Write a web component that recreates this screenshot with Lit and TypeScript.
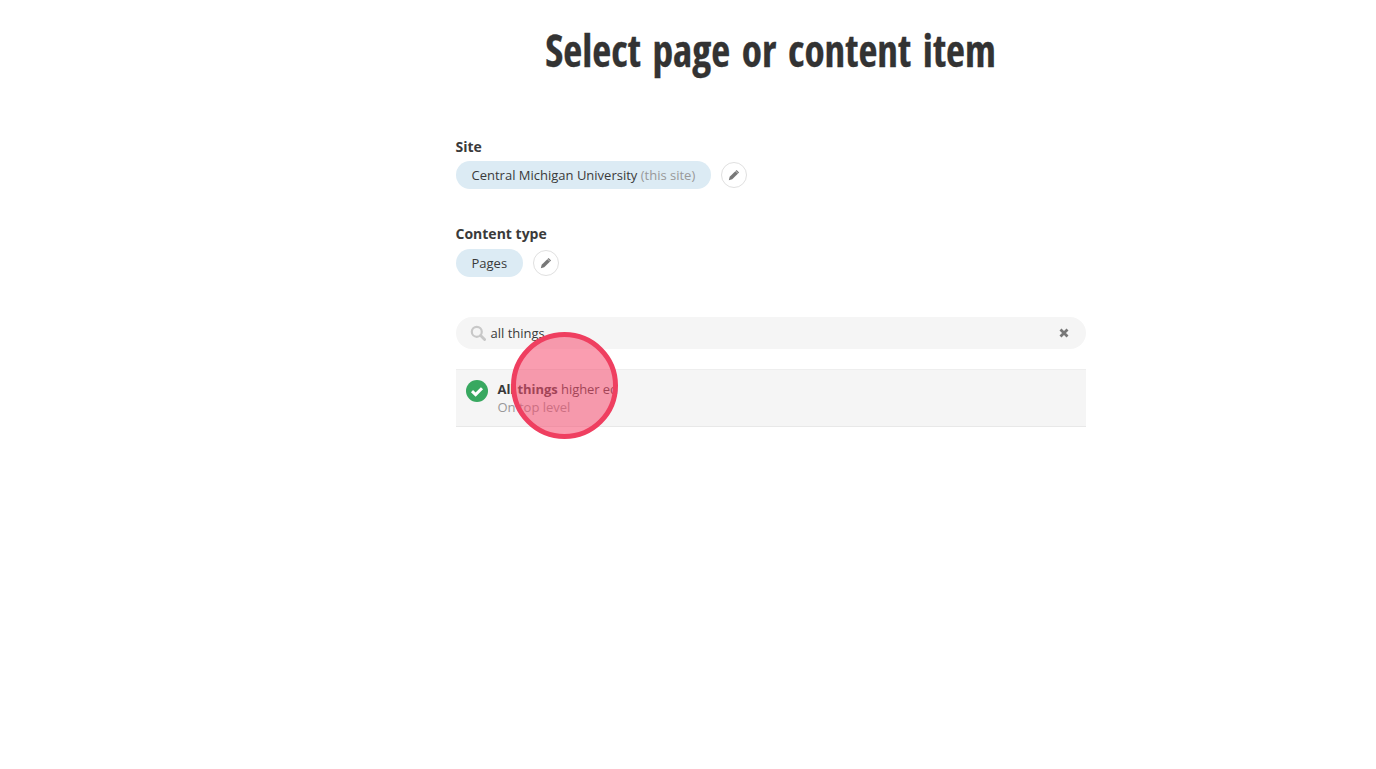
import { LitElement, html, css } from 'lit';
import { customElement } from 'lit/decorators.js';

const pencil = html`<svg class="pencil" viewBox="0 0 12 12"><path d="M8.6 .9 11.1 3.4 4.2 10.3 .8 11.2 1.7 7.8Z" fill="currentColor"/><path d="M7.5 2 10 4.5" stroke="#fff" stroke-width=".6"/></svg>`;

@customElement('app-root')
export class AppRoot extends LitElement {
    static styles = css`
        :host {
            display: block;
            height: 769px;
            background: #fff;
            font-family: 'Open Sans', sans-serif;
            font-size: 13px;
            color: #3a3a3a;
            overflow: hidden;
        }
        .page {
            position: relative;
            height: 769px;
            padding-left: 165px;
            box-sizing: border-box;
        }
        .title {
            margin: 0;
            padding-top: 25px;
            height: 137px;
            box-sizing: border-box;
            text-align: center;
            font-size: 44px;
            line-height: 50px;
            font-weight: 700;
            font-stretch: 75%;
            word-spacing: 4.5px;
            color: #333;
            -webkit-text-stroke: 0.3px #333;
            transform: scaleX(0.94);
        }
        .form {
            width: 630px;
            margin: 0 auto;
        }
        .field {
            height: 88px;
        }
        .label {
            font-weight: 700;
            font-size: 14px;
            line-height: 20px;
            height: 24px;
        }
        .field + .field .label {
            position: relative;
            top: -1px;
        }
        .row {
            display: flex;
            align-items: center;
            gap: 10px;
        }
        .pill {
            height: 28px;
            line-height: 28px;
            padding: 0 16px;
            border-radius: 14px;
            background: #dcebf4;
        }
        .muted {
            color: #999;
        }
        .edit {
            width: 24px;
            height: 24px;
            border: 1px solid #e0e0e0;
            border-radius: 50%;
            display: flex;
            align-items: center;
            justify-content: center;
            color: #777;
        }
        .pencil {
            width: 12px;
            height: 12px;
        }
        .search {
            display: flex;
            align-items: center;
            height: 32px;
            margin-top: 4px;
            padding: 0 12px 0 14px;
            border-radius: 16px;
            background: #f5f5f5;
        }
        .search .glass {
            width: 16px;
            height: 16px;
            margin-right: 5px;
        }
        .search .text {
            flex: 1;
        }
        .search .clear {
            width: 10px;
            height: 10px;
            margin-right: 5px;
        }
        .result {
            display: flex;
            align-items: flex-start;
            height: 58px;
            box-sizing: border-box;
            margin-top: 20px;
            padding: 10px 10px;
            background: #f5f5f5;
            border-top: 1px solid #eee;
            border-bottom: 1px solid #e8e8e8;
        }
        .check {
            width: 22px;
            height: 22px;
            margin-right: 10px;
            flex: none;
        }
        .lines {
            line-height: 18px;
        }
        .name {
            letter-spacing: -0.06px;
        }
        .sub {
            color: #999;
        }
        .spot {
            position: absolute;
            left: 511px;
            top: 332px;
            width: 107px;
            height: 107px;
            box-sizing: border-box;
            border: 5px solid #ef3f60;
            border-radius: 50%;
            background: rgba(246, 77, 111, 0.55);
        }
    `;

    render() {
        return html`
            <div class="page">
                <h1 class="title">Select page or content item</h1>
                <div class="form">
                    <div class="field">
                        <div class="label">Site</div>
                        <div class="row">
                            <span class="pill">Central Michigan University <span class="muted">(this site)</span></span>
                            <span class="edit">${pencil}</span>
                        </div>
                    </div>
                    <div class="field">
                        <div class="label">Content type</div>
                        <div class="row">
                            <span class="pill">Pages</span>
                            <span class="edit">${pencil}</span>
                        </div>
                    </div>
                    <div class="search">
                        <svg class="glass" viewBox="0 0 16 16" fill="none" stroke="#c8c8c8">
                            <circle cx="6.8" cy="6.8" r="5" stroke-width="2.2"/>
                            <path d="M10.6 10.6 14.6 14.6" stroke-width="2.8" stroke-linecap="round"/>
                        </svg>
                        <span class="text">all things</span>
                        <svg class="clear" viewBox="0 0 10 10"><path d="M1.5 1.5 8.5 8.5M8.5 1.5 1.5 8.5" stroke="#777" stroke-width="2.8"/></svg>
                    </div>
                    <div class="result">
                        <svg class="check" viewBox="0 0 22 22">
                            <circle cx="11" cy="11" r="11" fill="#38a860"/>
                            <path d="M6 11.2 9.6 14.6 16 8.2" fill="none" stroke="#fff" stroke-width="3"/>
                        </svg>
                        <div class="lines">
                            <div class="name"><b>All things</b> higher ed</div>
                            <div class="sub">On top level</div>
                        </div>
                    </div>
                </div>
                <div class="spot"></div>
            </div>
        `;
    }
}
